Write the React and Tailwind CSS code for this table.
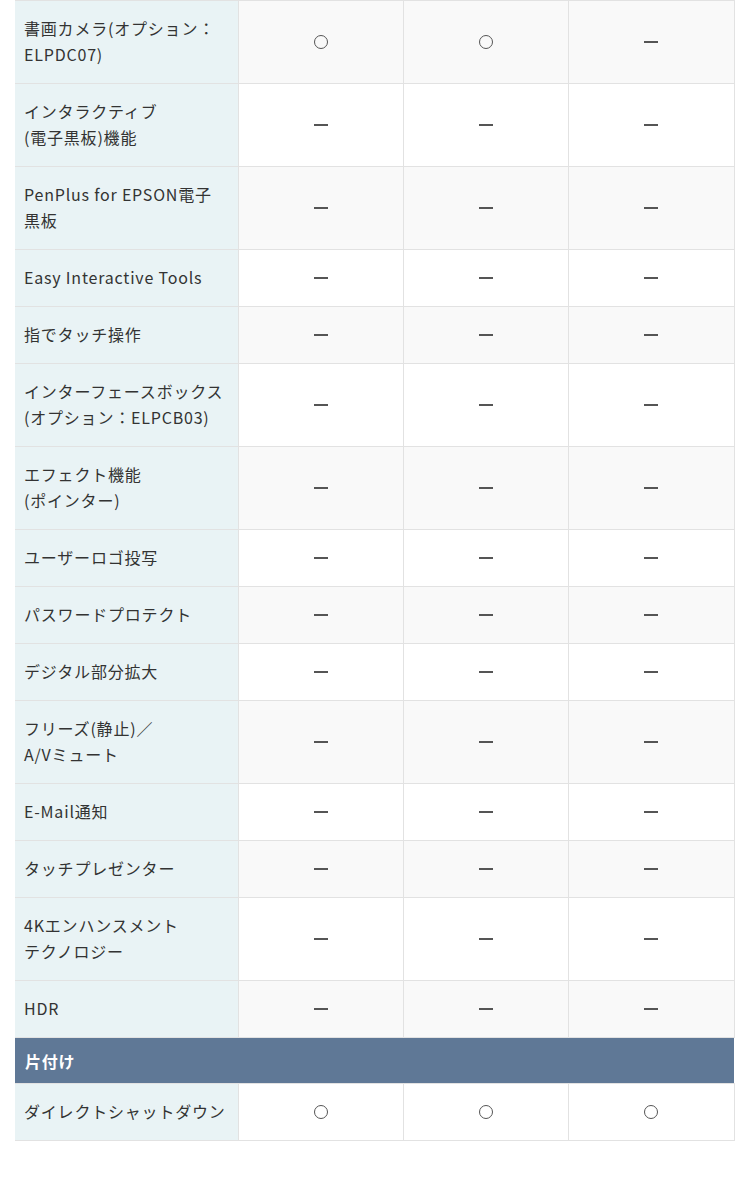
import React from "react";

const rows = [
  { label: ["書画カメラ(オプション：", "ELPDC07)"], v: ["o", "o", "-"] },
  { label: ["インタラクティブ", "(電子黒板)機能"], v: ["-", "-", "-"] },
  { label: ["PenPlus for EPSON電子", "黒板"], v: ["-", "-", "-"] },
  { label: ["Easy Interactive Tools"], v: ["-", "-", "-"] },
  { label: ["指でタッチ操作"], v: ["-", "-", "-"] },
  { label: ["インターフェースボックス", "(オプション：ELPCB03)"], v: ["-", "-", "-"] },
  { label: ["エフェクト機能", "(ポインター)"], v: ["-", "-", "-"] },
  { label: ["ユーザーロゴ投写"], v: ["-", "-", "-"] },
  { label: ["パスワードプロテクト"], v: ["-", "-", "-"] },
  { label: ["デジタル部分拡大"], v: ["-", "-", "-"] },
  { label: ["フリーズ(静止)／", "A/Vミュート"], v: ["-", "-", "-"] },
  { label: ["E-Mail通知"], v: ["-", "-", "-"] },
  { label: ["タッチプレゼンター"], v: ["-", "-", "-"] },
  { label: ["4Kエンハンスメント", "テクノロジー"], v: ["-", "-", "-"] },
  { label: ["HDR"], v: ["-", "-", "-"] },
];

const Mark = ({ type }) =>
  type === "o" ? (
    <span className="inline-block w-[14px] h-[14px] rounded-full border-[1.5px] border-[#555]" />
  ) : (
    <span className="inline-block w-[14px] h-[2px] bg-[#555] align-middle" />
  );

const Row = ({ label, v, gray }) => (
  <tr>
    <td className="bg-[#e9f3f5] border-t border-b border-[#e2e2e2] pl-[9px] pr-2 pt-[14px] pb-[16px] leading-[26px] text-[16px] tracking-[0.05em] text-[#333]">
      {label.map((l, i) => (
        <div key={i}>{l}</div>
      ))}
    </td>
    {v.map((m, i) => (
      <td
        key={i}
        className={`border-l border-t border-b border-[#e2e2e2] text-center align-middle ${
          gray ? "bg-[#f9f9f9]" : "bg-white"
        } ${i === 2 ? "border-r" : ""}`}
      >
        <div className="flex items-center justify-center h-full">
          <Mark type={m} />
        </div>
      </td>
    ))}
  </tr>
);

export default function App() {
  return (
    <div
      className="bg-white min-h-[1178px] pl-[15px] pr-[16px]"
      style={{ fontFamily: '"Noto Sans CJK JP", "Noto Sans", sans-serif' }}
    >
      <table className="w-[719px] border-collapse table-fixed">
        <colgroup>
          <col className="w-[223px]" />
          <col className="w-[165px]" />
          <col className="w-[165px]" />
          <col className="w-[166px]" />
        </colgroup>
        <tbody>
          {rows.map((r, i) => (
            <Row key={i} label={r.label} v={r.v} gray={i % 2 === 0} />
          ))}
          <tr>
            <td colSpan={4} className="bg-[#5f7896] h-[46px] pl-[10px] text-white font-bold text-[16px] tracking-[0.05em]">
              片付け
            </td>
          </tr>
          <Row label={["ダイレクトシャットダウン"]} v={["o", "o", "o"]} gray={false} />
        </tbody>
      </table>
    </div>
  );
}
